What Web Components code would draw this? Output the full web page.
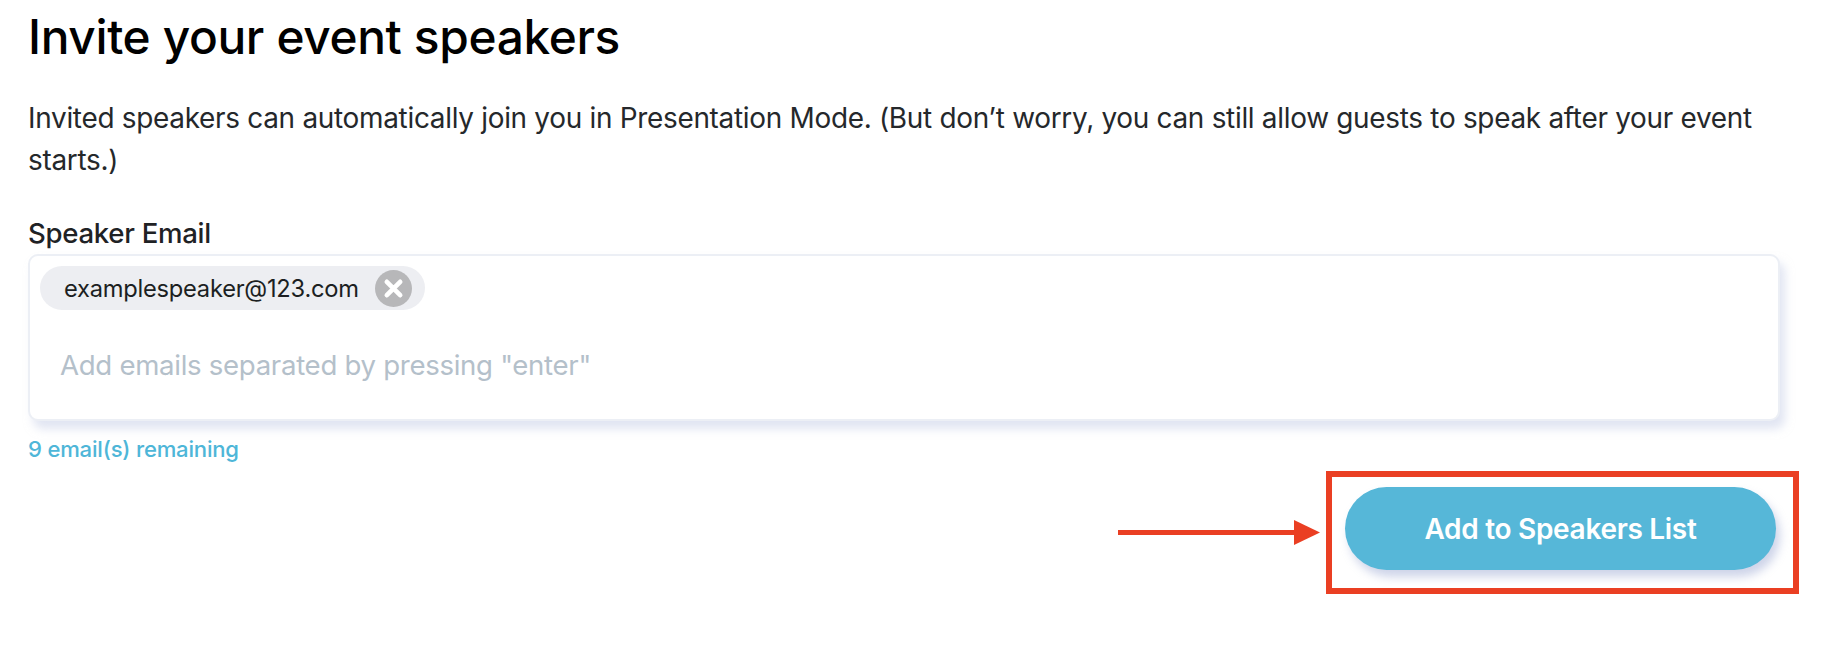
<!DOCTYPE html>
<html>
<head>
<meta charset="utf-8">
<title>Invite your event speakers</title>
<style>
	html, body { margin: 0; background: #fff; }
	body { width: 1824px; height: 660px; overflow: hidden; font-family: Inter, "Liberation Sans", sans-serif; }
</style>
</head>
<body>
<invite-form>
	<span slot="title">Invite your event speakers</span>
	<span slot="intro">Invited speakers can automatically join you in Presentation Mode. (But don’t worry, you can still allow guests to speak after your event starts.)</span>
	<email-field slot="field" label="Speaker Email" placeholder="Add emails separated by pressing &quot;enter&quot;" remaining="9 email(s) remaining">
		<email-chip>examplespeaker@123.com</email-chip>
	</email-field>
	<callout-button slot="action">Add to Speakers List</callout-button>
</invite-form>

<script>
const formTemplate = document.createElement('template');

formTemplate.innerHTML = `
	<style>
		:host {
			display: flex;
			flex-direction: column;
			padding: 10px 28px 0;
			box-sizing: border-box;
			width: 1824px;
		}

		h1 {
			margin: 0;
			font-size: 47.8px;
			line-height: 54px;
			font-weight: 500;
			letter-spacing: -0.35px;
			color: #000;
		}

		p {
			margin: 33px 0 0;
			width: 1752px;
			font-size: 27.95px;
			line-height: 42px;
			font-weight: 400;
			letter-spacing: -0.3px;
			color: #25282b;
		}
	</style>

	<h1><slot name="title"></slot></h1>
	<p><slot name="intro"></slot></p>
	<slot name="field"></slot>
	<slot name="action"></slot>
`;

customElements.define('invite-form', class extends HTMLElement {
	constructor() {
		super();
		const s = this.attachShadow({ mode: 'open' });
		s.appendChild(formTemplate.content.cloneNode(true));
	}
});

const fieldTemplate = document.createElement('template');

fieldTemplate.innerHTML = `
	<style>
		:host {
			display: block;
			margin-top: 35px;
		}

		label {
			display: block;
			font-size: 27.6px;
			line-height: 34px;
			font-weight: 500;
			letter-spacing: -0.3px;
			color: #1f2225;
		}

		.box {
			margin-top: 4px;
			width: 1752px;
			height: 167px;
			box-sizing: border-box;
			padding: 10px 10px 0;
			background: #fff;
			border: 2px solid #eceff5;
			border-radius: 10px;
			box-shadow: 5px 8px 10px rgba(200, 208, 232, 0.55);
		}

		.placeholder {
			margin: 38px 0 0 20px;
			font-size: 27.6px;
			line-height: 34px;
			letter-spacing: -0.3px;
			color: #b4c0ca;
		}

		.remaining {
			margin-top: 15px;
			font-size: 22.1px;
			line-height: 26px;
			font-weight: 500;
			letter-spacing: -0.2px;
			color: #4eb6d8;
		}
	</style>

	<label></label>
	<div class="box">
		<slot></slot>
		<div class="placeholder"></div>
	</div>
	<div class="remaining"></div>
`;

customElements.define('email-field', class extends HTMLElement {
	constructor() {
		super();
		const s = this.attachShadow({ mode: 'open' });
		s.appendChild(fieldTemplate.content.cloneNode(true));
		s.querySelector('label').textContent = this.getAttribute('label');
		s.querySelector('.placeholder').textContent = this.getAttribute('placeholder');
		s.querySelector('.remaining').textContent = this.getAttribute('remaining');
	}
});

const chipTemplate = document.createElement('template');

chipTemplate.innerHTML = `
	<style>
		:host {
			display: inline-flex;
			align-items: center;
			gap: 16px;
			height: 44px;
			padding: 0 13px 0 24px;
			border-radius: 22px;
			background: #edeef2;
			font-size: 23.7px;
			letter-spacing: -0.25px;
			color: #1c1f22;
			vertical-align: top;
		}

		svg {
			display: block;
		}
	</style>

	<slot></slot>
	<svg width="37" height="37" viewBox="0 0 36 36">
		<circle cx="18" cy="18" r="18" fill="#b7b7b9"/>
		<path d="M11.500 11.500 L24.500 24.500 M24.500 11.500 L11.500 24.500" stroke="#fff" stroke-width="4.500" stroke-linecap="round"/>
	</svg>
`;

customElements.define('email-chip', class extends HTMLElement {
	constructor() {
		super();
		const s = this.attachShadow({ mode: 'open' });
		s.appendChild(chipTemplate.content.cloneNode(true));
	}
});

const buttonTemplate = document.createElement('template');

buttonTemplate.innerHTML = `
	<style>
		:host {
			display: flex;
			justify-content: flex-end;
			align-items: center;
			margin-top: 9px;
			margin-right: -3px;
		}

		svg {
			display: block;
			margin-right: 6px;
			margin-top: -2px;
		}

		.frame {
			box-sizing: border-box;
			width: 473px;
			height: 123px;
			padding: 10px 17px 0 13px;
			border: 6px solid #ea3f23;
		}

		button {
			display: block;
			width: 431px;
			height: 83px;
			padding: 0;
			border: 0;
			border-radius: 42px;
			background: #56b7d8;
			box-shadow: 4px 7px 10px rgba(190, 198, 226, 0.75);
			color: #fff;
			font: 600 28px Inter, "Liberation Sans", sans-serif;
			letter-spacing: -0.3px;
		}
	</style>

	<svg width="202" height="26" viewBox="0 0 202 26">
		<rect x="0" y="11" width="180" height="5" fill="#ea3f23"/>
		<path d="M176 1 L202 13.500 L176 26 Z" fill="#ea3f23"/>
	</svg>
	<div class="frame">
		<button><slot></slot></button>
	</div>
`;

customElements.define('callout-button', class extends HTMLElement {
	constructor() {
		super();
		const s = this.attachShadow({ mode: 'open' });
		s.appendChild(buttonTemplate.content.cloneNode(true));
	}
});
</script>
</body>
</html>
